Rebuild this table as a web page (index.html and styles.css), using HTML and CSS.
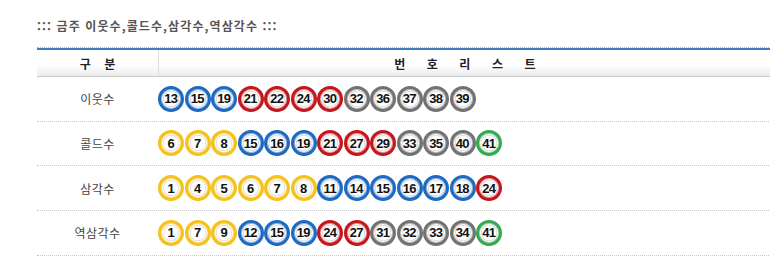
FILE: index.html
```html
<!DOCTYPE html>
<html lang="ko">
<head>
<meta charset="utf-8">
<link rel="stylesheet" href="styles.css">
</head>
<body>
<div class="wrap">
  <h2 class="title">::: 금주 이웃수,콜드수,삼각수,역삼각수 :::</h2>
  <div class="table">
    <div class="head">
      <div class="hcell c1">구&nbsp;&nbsp;&nbsp;&nbsp;분</div>
      <div class="hcell c2 wide">번&nbsp;&nbsp;&nbsp;&nbsp;&nbsp;&nbsp;호&nbsp;&nbsp;&nbsp;&nbsp;&nbsp;&nbsp;리&nbsp;&nbsp;&nbsp;&nbsp;&nbsp;&nbsp;스&nbsp;&nbsp;&nbsp;&nbsp;&nbsp;&nbsp;트</div>
    </div>
    <div class="row">
      <div class="label">이웃수</div>
      <div class="balls">
        <span class="ball b">13</span><span class="ball b">15</span><span class="ball b">19</span><span class="ball r">21</span><span class="ball r">22</span><span class="ball r">24</span><span class="ball r">30</span><span class="ball g">32</span><span class="ball g">36</span><span class="ball g">37</span><span class="ball g">38</span><span class="ball g">39</span>
      </div>
    </div>
    <div class="row">
      <div class="label">콜드수</div>
      <div class="balls">
        <span class="ball y">6</span><span class="ball y">7</span><span class="ball y">8</span><span class="ball b">15</span><span class="ball b">16</span><span class="ball b">19</span><span class="ball r">21</span><span class="ball r">27</span><span class="ball r">29</span><span class="ball g">33</span><span class="ball g">35</span><span class="ball g">40</span><span class="ball gr">41</span>
      </div>
    </div>
    <div class="row">
      <div class="label">삼각수</div>
      <div class="balls">
        <span class="ball y">1</span><span class="ball y">4</span><span class="ball y">5</span><span class="ball y">6</span><span class="ball y">7</span><span class="ball y">8</span><span class="ball b">11</span><span class="ball b">14</span><span class="ball b">15</span><span class="ball b">16</span><span class="ball b">17</span><span class="ball b">18</span><span class="ball r">24</span>
      </div>
    </div>
    <div class="row">
      <div class="label">역삼각수</div>
      <div class="balls">
        <span class="ball y">1</span><span class="ball y">7</span><span class="ball y">9</span><span class="ball b">12</span><span class="ball b">15</span><span class="ball b">19</span><span class="ball r">24</span><span class="ball r">27</span><span class="ball g">31</span><span class="ball g">32</span><span class="ball g">33</span><span class="ball g">34</span><span class="ball gr">41</span>
      </div>
    </div>
  </div>
</div>
</body>
</html>
```
FILE: styles.css
```css
html, body {
  margin: 0;
  padding: 0;
  background: #fff;
  overflow: hidden;
}
body {
  font-family: "Noto Sans CJK KR", "Noto Sans", sans-serif;
}
.wrap {
  padding: 19px 0 0 37px;
}
.title {
  margin: 0;
  height: 28px;
  font-size: 12px;
  line-height: 14px;
  font-weight: bold;
  color: #555;
  letter-spacing: 1.1px;
}
.table {
  width: 740px;
  border-top: 1px dotted #9cc0e0;
}
.head {
  display: flex;
  height: 26px;
  border-top: 2px solid #3f7cc0;
  border-bottom: 1px solid #c8c8c8;
  background: linear-gradient(#ffffff 0%, #ffffff 55%, #ececec 100%);
  font-size: 12px;
  font-weight: bold;
  color: #222;
}
.hcell {
  display: flex;
  align-items: center;
  justify-content: center;
}
.c1 {
  width: 121px;
  border-right: 1px solid #dcdcdc;
}
.c2 {
  width: 612px;
}
.wide {
  letter-spacing: 0.2px;
}
.row {
  display: flex;
  align-items: center;
  height: 43.67px;
  border-bottom: 1px dotted #c8c8c8;
}
.label {
  width: 121px;
  text-align: center;
  font-size: 12px;
  color: #444;
  letter-spacing: 0.5px;
}
.balls {
  display: flex;
  gap: 0.5px;
}
.ball {
  box-sizing: border-box;
  width: 26px;
  height: 26px;
  border-radius: 50%;
  border: 3.5px solid #888;
  background: radial-gradient(circle at 50% 40%, #ffffff 55%, #e6e6e6 100%);
  display: flex;
  align-items: center;
  justify-content: center;
  font-family: "Liberation Sans", Arial, sans-serif;
  font-weight: bold;
  font-size: 13px;
  letter-spacing: -0.7px;
  color: #111;
  padding-right: 0.5px;
}
.ball.b { border-color: #1d6ac0; box-shadow: inset 0 0 0 1px #8fb8e6, inset 0 0 0 2px #fff, inset 0 0 0 2.5px #ccc; }
.ball.r { border-color: #c4161c; box-shadow: inset 0 0 0 1px #e89a9c, inset 0 0 0 2px #fff, inset 0 0 0 2.5px #ccc; }
.ball.g { border-color: #727272; box-shadow: inset 0 0 0 1px #bcbcbc, inset 0 0 0 2px #fff, inset 0 0 0 2.5px #ccc; }
.ball.y { border-color: #f4c21a; box-shadow: inset 0 0 0 1px #fbe18a, inset 0 0 0 2px #fff, inset 0 0 0 2.5px #ccc; }
.ball.gr { border-color: #34a853; box-shadow: inset 0 0 0 1px #9fdcae, inset 0 0 0 2px #fff, inset 0 0 0 2.5px #ccc; }
```
